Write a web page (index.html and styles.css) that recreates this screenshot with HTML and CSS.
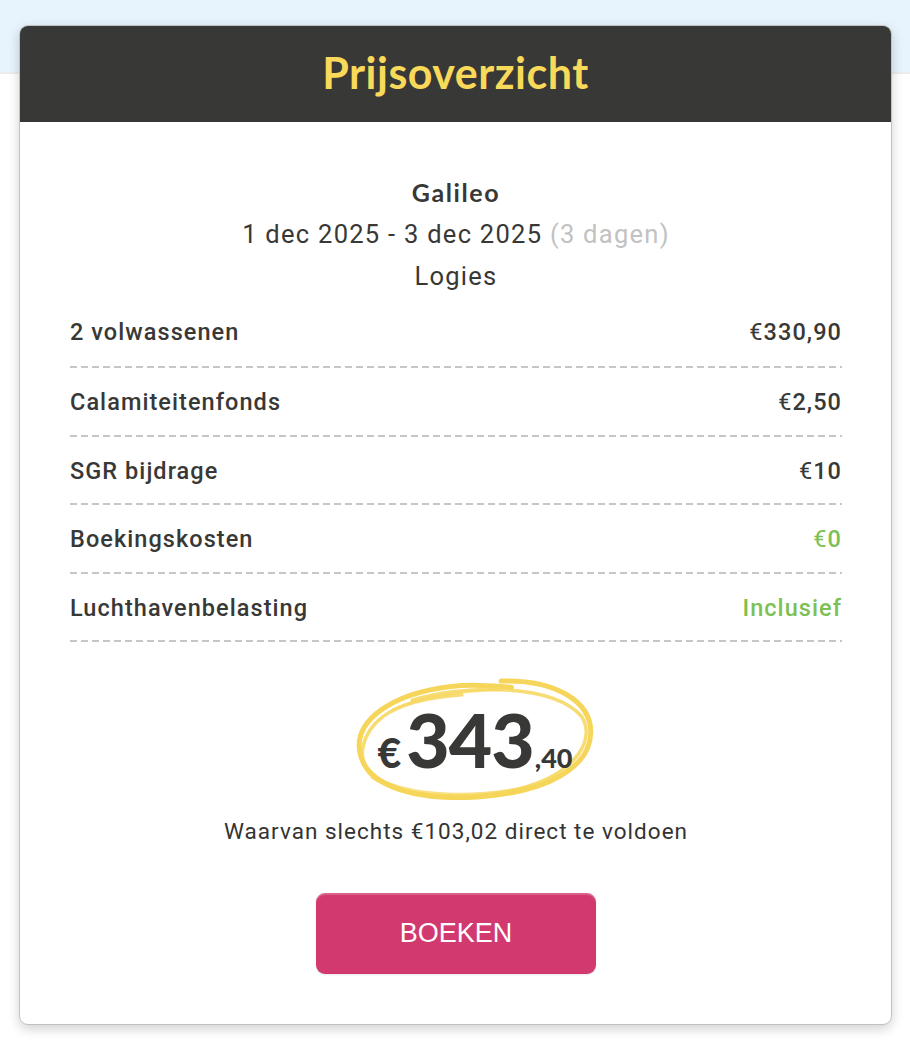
FILE: index.html
```html
<!DOCTYPE html>
<html lang="nl">
<head>
<meta charset="utf-8">
<title>Prijsoverzicht</title>
<link rel="stylesheet" href="styles.css">
</head>
<body>
<div class="card">
  <div class="card-header">
    <h1 class="title">Prijsoverzicht</h1>
  </div>
  <div class="card-body">
    <div class="summary">
      <div class="hotel">Galileo</div>
      <div class="dates">1 dec 2025 - 3 dec 2025 <span class="days">(3 dagen)</span></div>
      <div class="board">Logies</div>
    </div>
    <ul class="lines">
      <li class="line"><span class="label">2 volwassenen</span><span class="amount"><span class="cur">€</span>330,90</span></li>
      <li class="line"><span class="label">Calamiteitenfonds</span><span class="amount"><span class="cur">€</span>2,50</span></li>
      <li class="line"><span class="label">SGR bijdrage</span><span class="amount"><span class="cur">€</span>10</span></li>
      <li class="line"><span class="label">Boekingskosten</span><span class="amount green"><span class="cur">€</span>0</span></li>
      <li class="line"><span class="label">Luchthavenbelasting</span><span class="amount green">Inclusief</span></li>
    </ul>
    <div class="total-wrap">
      <div class="total">
        <svg class="brush" viewBox="0 0 240 126" aria-hidden="true">
          <g transform="rotate(-4 120 63)">
            <path d="M150 7 C 205 9, 238 34, 236 64 C 233 99, 190 121, 118 121 C 50 120, 6 100, 4 66 C 2 36, 40 12, 98 9 C 120 8, 140 11, 160 14" fill="none" stroke="#f6d65a" stroke-width="5" stroke-linecap="round"/>
            <path d="M60 20 C 110 8, 200 12, 228 48 C 240 70, 222 104, 160 116 C 110 124, 40 118, 14 92 C 0 76, 6 50, 30 34 C 50 22, 80 18, 110 18" fill="none" stroke="#f6d65a" stroke-width="3.5" stroke-linecap="round" opacity="0.85"/>
            <path d="M16 94 C 50 118, 120 125, 184 113" fill="none" stroke="#f6d65a" stroke-width="5" stroke-linecap="round" opacity="0.75"/>
            <path d="M40 28 C 70 16, 120 14, 150 16" fill="none" stroke="#f6d65a" stroke-width="2.5" stroke-linecap="round" opacity="0.6"/>
          </g>
        </svg>
        <span class="t-cur">€</span><span class="t-int">343</span><span class="t-dec">,40</span>
      </div>
    </div>
    <p class="deposit">Waarvan slechts €103,02 direct te voldoen</p>
    <div class="actions">
      <button class="book" type="button">BOEKEN</button>
    </div>
  </div>
</div>
</body>
</html>
```
FILE: styles.css
```css
html, body {
  margin: 0;
  padding: 0;
}
body {
  background: linear-gradient(to bottom, #e7f4fd 0, #e7f4fd 72px, #ececec 72px, #ececec 74px, #ffffff 74px);
  font-family: Roboto, "Liberation Sans", sans-serif;
  color: #333333;
  min-height: 1052px;
  padding-top: 25px;
  box-sizing: border-box;
}
.card {
  margin-left: 19px;
  width: 873px;
  box-sizing: border-box;
  background: #ffffff;
  border: 1px solid #c2c2c2;
  border-radius: 9px;
  overflow: hidden;
  box-shadow: 0 4px 12px rgba(0, 0, 0, 0.18);
}
.card-header {
  background: #383836;
  height: 96px;
  display: flex;
  align-items: center;
  justify-content: center;
}
.title {
  margin: 0;
  font-family: Lato, "Open Sans", sans-serif;
  font-weight: 700;
  font-size: 43px;
  color: #f8d95a;
  letter-spacing: 0.5px;
  line-height: 1;
  padding-bottom: 4px;
}
.card-body {
  padding: 50px 49px 50px 50px;
}
.summary {
  text-align: center;
}
.hotel {
  font-family: Lato, sans-serif;
  font-weight: 700;
  font-size: 25px;
  letter-spacing: 1.6px;
  line-height: 40px;
  color: #383836;
}
.dates {
  font-size: 25.5px;
  letter-spacing: 0.05em;
  line-height: 44px;
  color: #383836;
}
.days {
  color: #c2c2c2;
}
.board {
  font-size: 25.5px;
  letter-spacing: 0.05em;
  line-height: 40px;
  color: #383836;
}
.lines {
  list-style: none;
  margin: 0;
  padding: 0;
}
.line {
  display: flex;
  justify-content: space-between;
  align-items: center;
  height: 68.5px;
  background-image: repeating-linear-gradient(to right, #c6c6c6 0, #c6c6c6 7px, transparent 7px, transparent 11px);
  background-size: 100% 2px;
  background-position: left bottom;
  background-repeat: no-repeat;
  font-size: 23.5px;
  letter-spacing: 0.045em;
  font-weight: 500;
  color: #383836;
}
.line:first-child {
  height: 72px;
}
.cur {
  font-weight: 400;
}
.green {
  color: #7dc053;
}
.total-wrap {
  display: flex;
  justify-content: center;
  padding-top: 34px;
}
.total {
  position: relative;
  margin-left: 38px;
  width: 240px;
  height: 126px;
  display: flex;
  align-items: baseline;
  justify-content: center;
  font-family: Lato, sans-serif;
  font-weight: 900;
  color: #383836;
}
.brush {
  position: absolute;
  left: 0;
  top: 0;
  width: 240px;
  height: 126px;
}
.t-cur, .t-int, .t-dec {
  position: relative;
}
.t-cur {
  font-size: 41px;
  margin-right: 5px;
}
.t-int {
  font-size: 75px;
  line-height: 126px;
  letter-spacing: -1px;
}
.t-dec {
  font-size: 27px;
  margin-left: 1px;
}
.deposit {
  margin: 14px 0 0 0;
  text-align: center;
  font-size: 22.5px;
  letter-spacing: 0.045em;
  line-height: 30px;
  color: #333333;
}
.actions {
  display: flex;
  justify-content: center;
  padding-top: 47px;
}
.book {
  width: 280px;
  height: 81px;
  border: 0;
  border-radius: 9px;
  background: #d2396f;
  box-shadow: inset 0 2px 0 rgba(255, 255, 255, 0.2), 0 1px 2px rgba(0,0,0,0.1);
  color: #ffffff;
  font-family: "Liberation Sans", Arial, sans-serif;
  font-size: 27px;
  font-weight: 400;
  cursor: pointer;
}
```
